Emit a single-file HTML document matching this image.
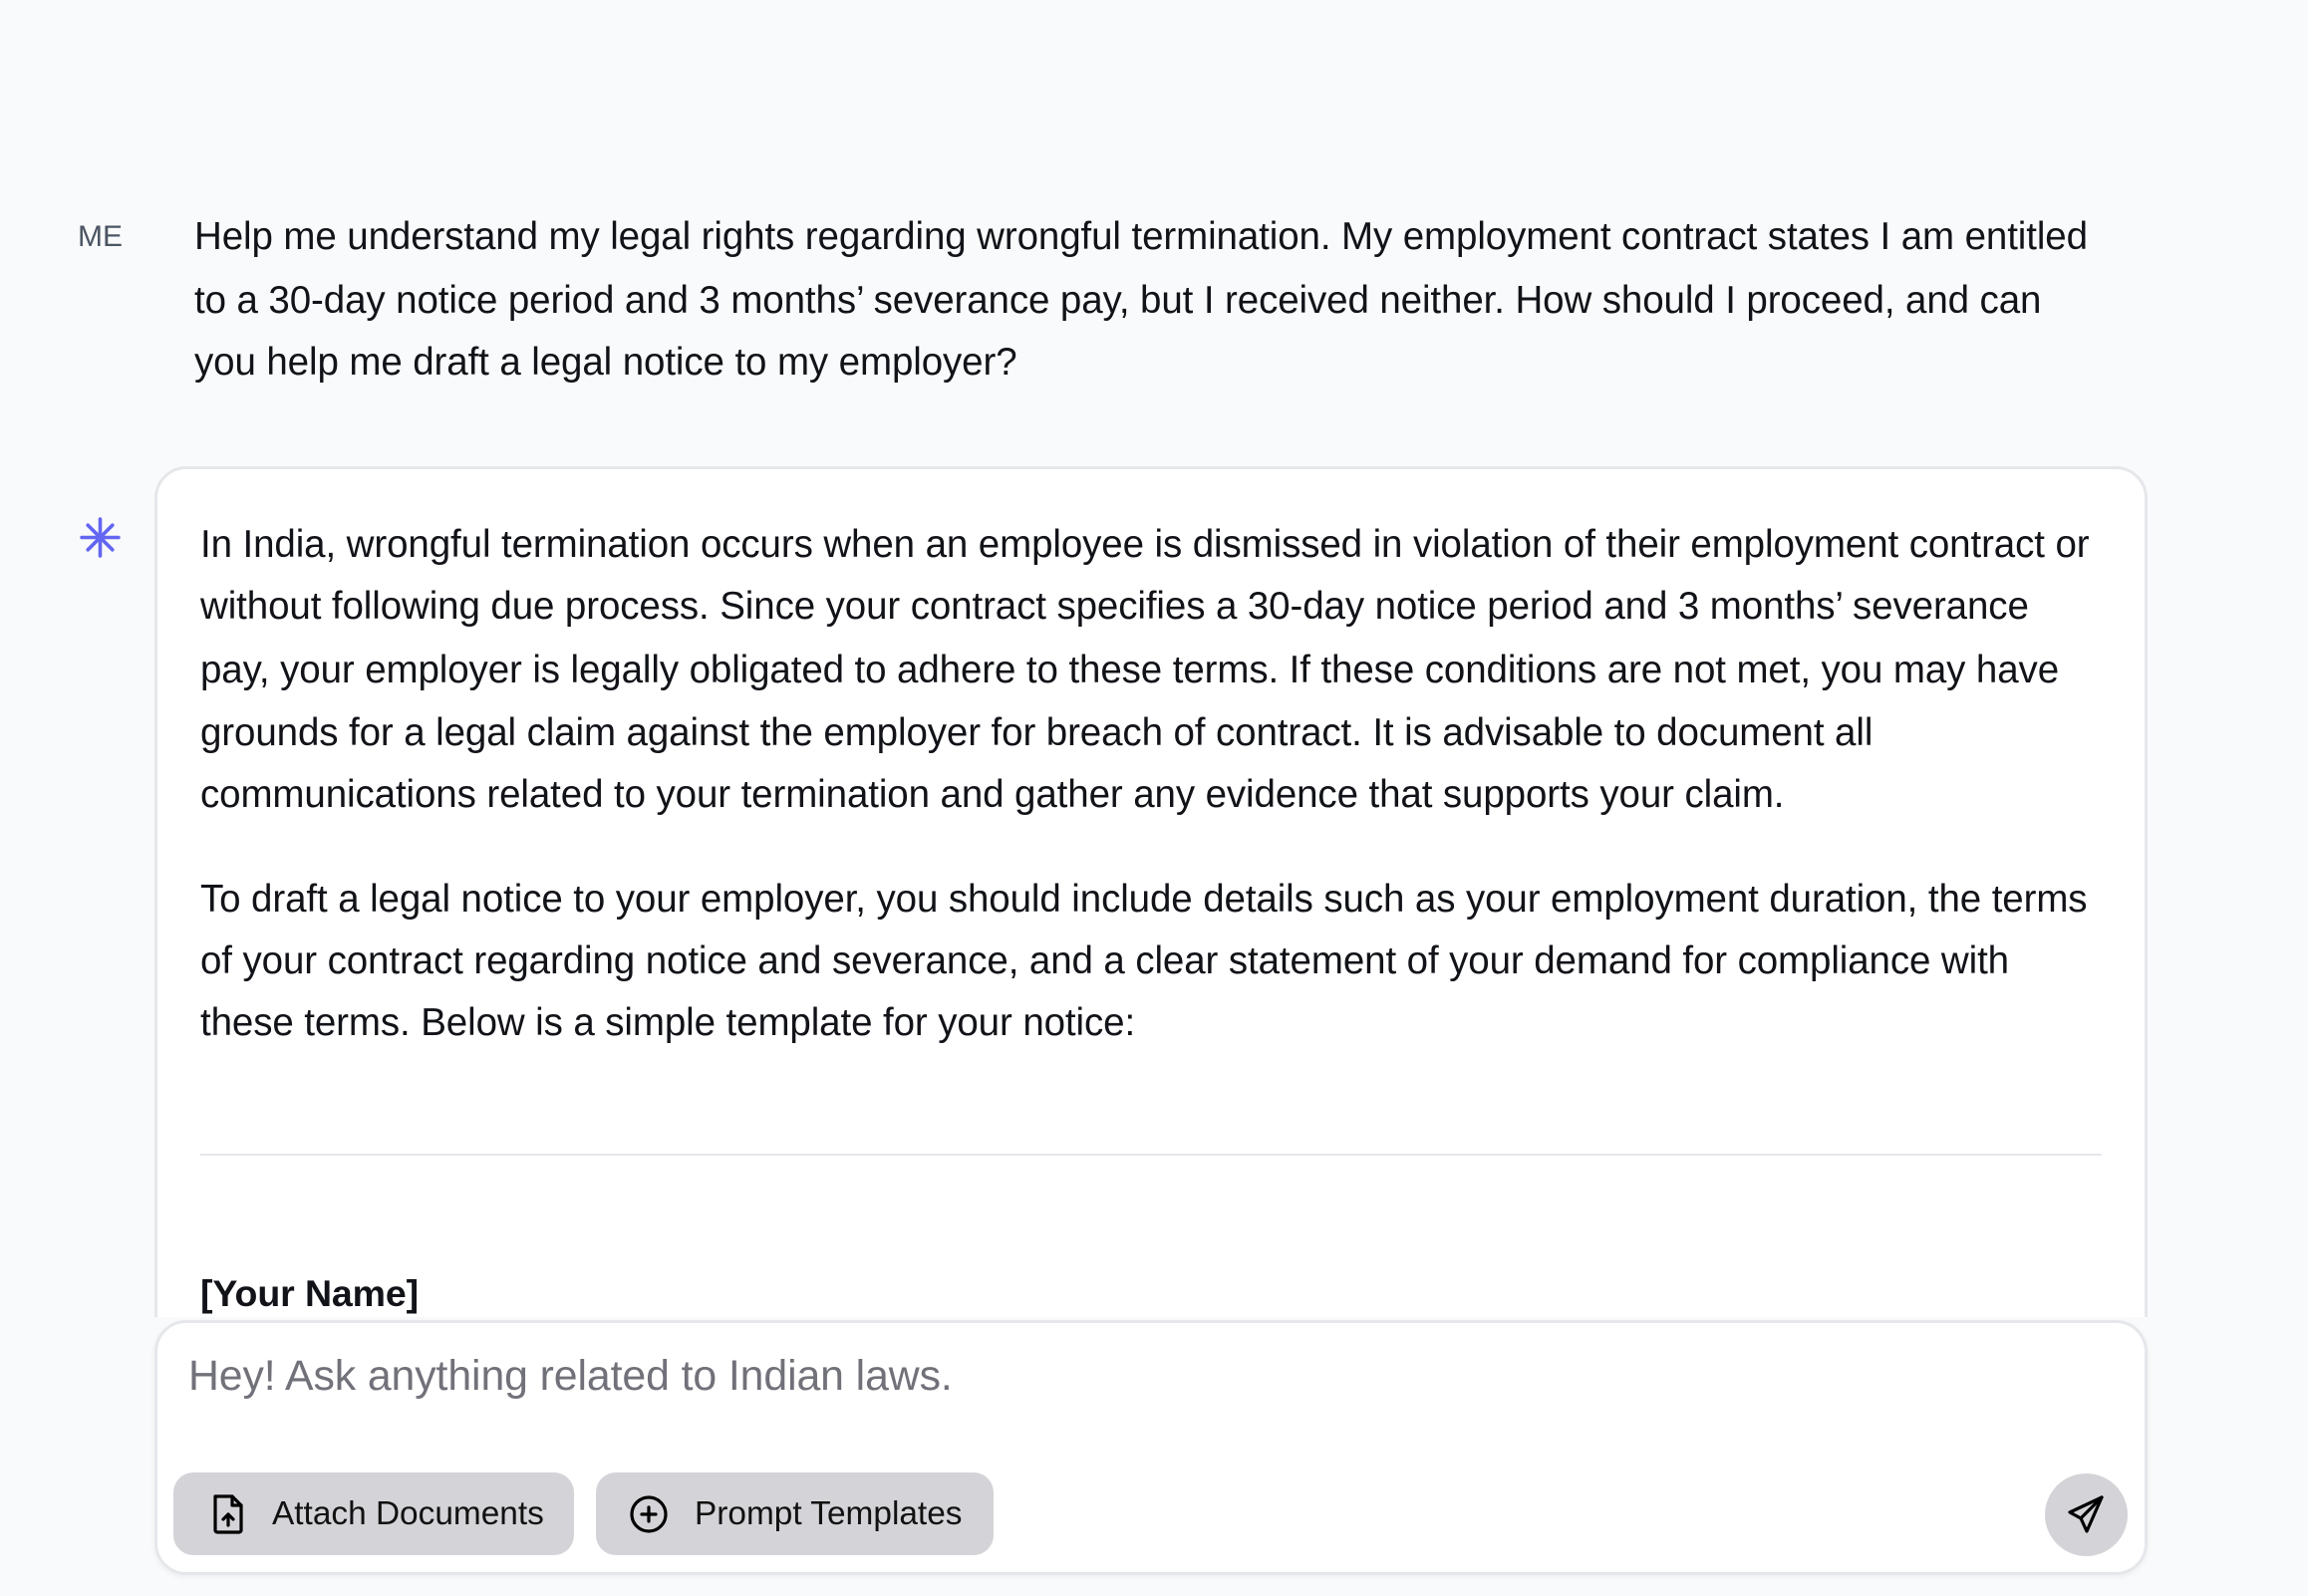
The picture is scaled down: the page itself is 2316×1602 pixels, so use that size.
<!DOCTYPE html>
<html><head><meta charset="utf-8"><style>
*{margin:0;padding:0;box-sizing:border-box}
html,body{width:2316px;height:1602px;overflow:hidden;background:#f9fafb;font-family:"Liberation Sans",sans-serif;color:#111318}
.abs{position:absolute}
.ln{position:absolute;white-space:nowrap;font-size:38.5px;line-height:40px;letter-spacing:-0.1px}
.me{position:absolute;left:78px;top:223px;font-size:30px;color:#4b5563;line-height:30px}
.card{position:absolute;left:155px;top:468px;width:2000px;height:900px;background:#fff;border:3px solid #e5e7eb;border-radius:32px}
.input{position:absolute;left:155px;top:1325px;width:2000px;height:256px;background:#fff;border:3px solid #e5e7eb;border-radius:32px;box-shadow:0 2px 6px rgba(0,0,0,.05)}
.btn{position:absolute;top:1478px;height:83px;background:#d4d4d8;border-radius:20px;font-size:33.4px;color:#111;display:flex;align-items:center}
</style></head><body>
<div class="me">ME</div>
<div class="ln" style="left:195px;top:218px">Help me understand my legal rights regarding wrongful termination. My employment contract states I am entitled</div>
<div class="ln" style="left:195px;top:282px">to a 30-day notice period and 3 months’ severance pay, but I received neither. How should I proceed, and can</div>
<div class="ln" style="left:195px;top:344px">you help me draft a legal notice to my employer?</div>

<div class="card"></div>
<svg class="abs" style="left:80px;top:519px" width="41" height="41" viewBox="0 0 40 40"><g stroke="#6366f1" stroke-width="3.5" stroke-linecap="round"><line x1="20" y1="2" x2="20" y2="38"/><line x1="2" y1="20" x2="38" y2="20"/><line x1="8" y1="8" x2="32" y2="32"/><line x1="32" y1="8" x2="8" y2="32"/></g></svg>
<div class="ln" style="left:201px;top:527px">In India, wrongful termination occurs when an employee is dismissed in violation of their employment contract or</div>
<div class="ln" style="left:201px;top:589px">without following due process. Since your contract specifies a 30-day notice period and 3 months’ severance</div>
<div class="ln" style="left:201px;top:653px">pay, your employer is legally obligated to adhere to these terms. If these conditions are not met, you may have</div>
<div class="ln" style="left:201px;top:716px">grounds for a legal claim against the employer for breach of contract. It is advisable to document all</div>
<div class="ln" style="left:201px;top:778px">communications related to your termination and gather any evidence that supports your claim.</div>
<div class="ln" style="left:201px;top:883px">To draft a legal notice to your employer, you should include details such as your employment duration, the terms</div>
<div class="ln" style="left:201px;top:945px">of your contract regarding notice and severance, and a clear statement of your demand for compliance with</div>
<div class="ln" style="left:201px;top:1007px">these terms. Below is a simple template for your notice:</div>
<div class="abs" style="left:201px;top:1158px;width:1908px;height:2px;background:#e5e7eb"></div>
<div class="ln" style="left:201px;top:1278px;font-weight:bold;font-size:37.5px">[Your Name]</div>

<div class="abs" style="left:0;top:1322px;width:2316px;height:280px;background:#f9fafb"></div>
<div class="input"></div>
<div class="ln" style="left:189px;top:1360px;color:#71717a;font-size:42.8px;line-height:42px">Hey! Ask anything related to Indian laws.</div>
<div class="btn" style="left:174px;width:402px">
<svg style="margin-left:38px" width="34" height="42" viewBox="0 0 34 42" fill="none" stroke="#000" stroke-width="3.2" stroke-linejoin="round" stroke-linecap="round"><path d="M4 3h17l9 9v25a2 2 0 0 1-2 2H6a2 2 0 0 1-2-2z"/><path d="M21 3v9h9"/><path d="M17 32V21M12 26l5-5 5 5"/></svg>
<span style="margin-left:27px">Attach Documents</span></div>
<div class="btn" style="left:598px;width:399px">
<svg style="margin-left:33px" width="40" height="40" viewBox="0 0 40 40" fill="none" stroke="#000" stroke-width="3.2" stroke-linecap="round"><circle cx="20" cy="20" r="17"/><path d="M20 13v14M13 20h14"/></svg>
<span style="margin-left:26px">Prompt Templates</span></div>
<div class="abs" style="left:2052px;top:1479px;width:83px;height:83px;border-radius:50%;background:#d4d4d8"></div>
<svg class="abs" style="left:2074px;top:1500px" width="40" height="40" viewBox="0 0 40 40" fill="none" stroke="#000" stroke-width="3.2" stroke-linejoin="round" stroke-linecap="round"><path d="M35 3L3 18l11 6 6 13z"/><path d="M35 3L14 24"/></svg>
</body></html>
